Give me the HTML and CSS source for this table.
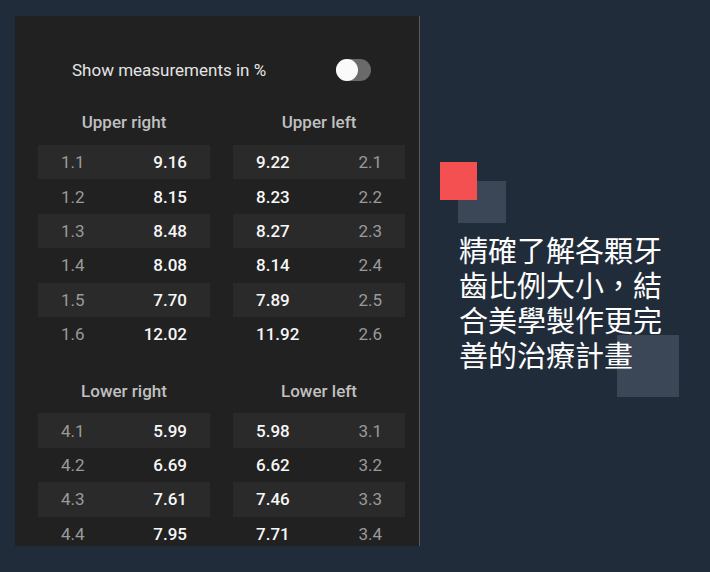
FILE: index.html
```html
<!DOCTYPE html>
<html lang="zh-Hant">
<head>
<meta charset="utf-8">
<link rel="stylesheet" href="styles.css">
</head>
<body>
<div class="page">
  <section class="panel">
    <div class="toggle-row">
      <span class="toggle-label">Show measurements in %</span>
      <span class="switch"><span class="knob"></span></span>
    </div>

    <div class="quadrants">
      <div class="quad">
        <h3 class="quad-title">Upper right</h3>
        <div class="row"><span class="lab">1.1</span><span class="val">9.16</span></div>
        <div class="row"><span class="lab">1.2</span><span class="val">8.15</span></div>
        <div class="row"><span class="lab">1.3</span><span class="val">8.48</span></div>
        <div class="row"><span class="lab">1.4</span><span class="val">8.08</span></div>
        <div class="row"><span class="lab">1.5</span><span class="val">7.70</span></div>
        <div class="row"><span class="lab">1.6</span><span class="val">12.02</span></div>
      </div>
      <div class="quad">
        <h3 class="quad-title">Upper left</h3>
        <div class="row"><span class="val">9.22</span><span class="lab">2.1</span></div>
        <div class="row"><span class="val">8.23</span><span class="lab">2.2</span></div>
        <div class="row"><span class="val">8.27</span><span class="lab">2.3</span></div>
        <div class="row"><span class="val">8.14</span><span class="lab">2.4</span></div>
        <div class="row"><span class="val">7.89</span><span class="lab">2.5</span></div>
        <div class="row"><span class="val">11.92</span><span class="lab">2.6</span></div>
      </div>
      <div class="quad lower">
        <h3 class="quad-title">Lower right</h3>
        <div class="row"><span class="lab">4.1</span><span class="val">5.99</span></div>
        <div class="row"><span class="lab">4.2</span><span class="val">6.69</span></div>
        <div class="row"><span class="lab">4.3</span><span class="val">7.61</span></div>
        <div class="row"><span class="lab">4.4</span><span class="val">7.95</span></div>
      </div>
      <div class="quad lower">
        <h3 class="quad-title">Lower left</h3>
        <div class="row"><span class="val">5.98</span><span class="lab">3.1</span></div>
        <div class="row"><span class="val">6.62</span><span class="lab">3.2</span></div>
        <div class="row"><span class="val">7.46</span><span class="lab">3.3</span></div>
        <div class="row"><span class="val">7.71</span><span class="lab">3.4</span></div>
      </div>
    </div>
  </section>

  <aside class="caption-area">
    <span class="deco deco-gray-1"></span>
    <span class="deco deco-red"></span>
    <span class="deco deco-gray-2"></span>
    <p class="caption">精確了解各顆牙<br>齒比例大小，結<br>合美學製作更完<br>善的治療計畫</p>
  </aside>
</div>
</body>
</html>
```

FILE: styles.css
```css
html, body {
  margin: 0;
  padding: 0;
}
body {
  background: #212c3a;
  width: 710px;
  height: 572px;
  overflow: hidden;
  font-family: Roboto, "Noto Sans", sans-serif;
}
.page {
  display: flex;
  align-items: flex-start;
  padding: 16px 0 0 15px;
}
.panel {
  width: 404px;
  height: 530px;
  background: #212121;
  border-right: 1px solid #5a5a5a;
  overflow: hidden;
  box-sizing: content-box;
}
.toggle-row {
  display: flex;
  align-items: center;
  justify-content: space-between;
  height: 24px;
  margin: 42px 48px 0 57px;
}
.toggle-label {
  font-size: 17px;
  color: #e4e4e4;
}
.switch {
  position: relative;
  display: block;
  width: 35px;
  height: 22px;
  border-radius: 11px;
  background: #6a6a6a;
}
.knob {
  position: absolute;
  left: 0;
  top: 0;
  width: 22px;
  height: 22px;
  border-radius: 50%;
  background: #fafafa;
}
.quadrants {
  display: grid;
  grid-template-columns: 172px 172px;
  column-gap: 23px;
  padding-left: 23px;
}
.quad-title {
  margin: 28px 0 11px;
  height: 24px;
  line-height: 24px;
  text-align: center;
  font-size: 17px;
  font-weight: 500;
  color: #c0c0c0;
}
.lower .quad-title {
  margin-top: 28px;
  margin-bottom: 10px;
}
.row {
  display: flex;
  align-items: center;
  justify-content: space-between;
  height: 34.4px;
  padding: 0 23px;
  font-size: 17px;
}
.row:nth-of-type(odd) {
  background: #2a2a2a;
}
.lab {
  color: #9a9a9a;
}
.val {
  color: #f7f7f7;
  font-weight: 500;
}
.caption-area {
  position: relative;
  flex: 1;
  height: 556px;
}
.deco {
  position: absolute;
  display: block;
}
.deco-gray-1 {
  left: 38px;
  top: 165px;
  width: 48px;
  height: 42px;
  background: #3b4656;
}
.deco-red {
  left: 20px;
  top: 146px;
  width: 37px;
  height: 38px;
  background: #f44f51;
}
.deco-gray-2 {
  left: 197px;
  top: 319px;
  width: 62px;
  height: 62px;
  background: #3b4656;
}
.caption {
  position: relative;
  margin: 216px 0 0 39px;
  font-family: "Noto Sans CJK TC", "Noto Sans CJK SC", sans-serif;
  font-size: 29px;
  line-height: 35px;
  color: #ffffff;
}
```
